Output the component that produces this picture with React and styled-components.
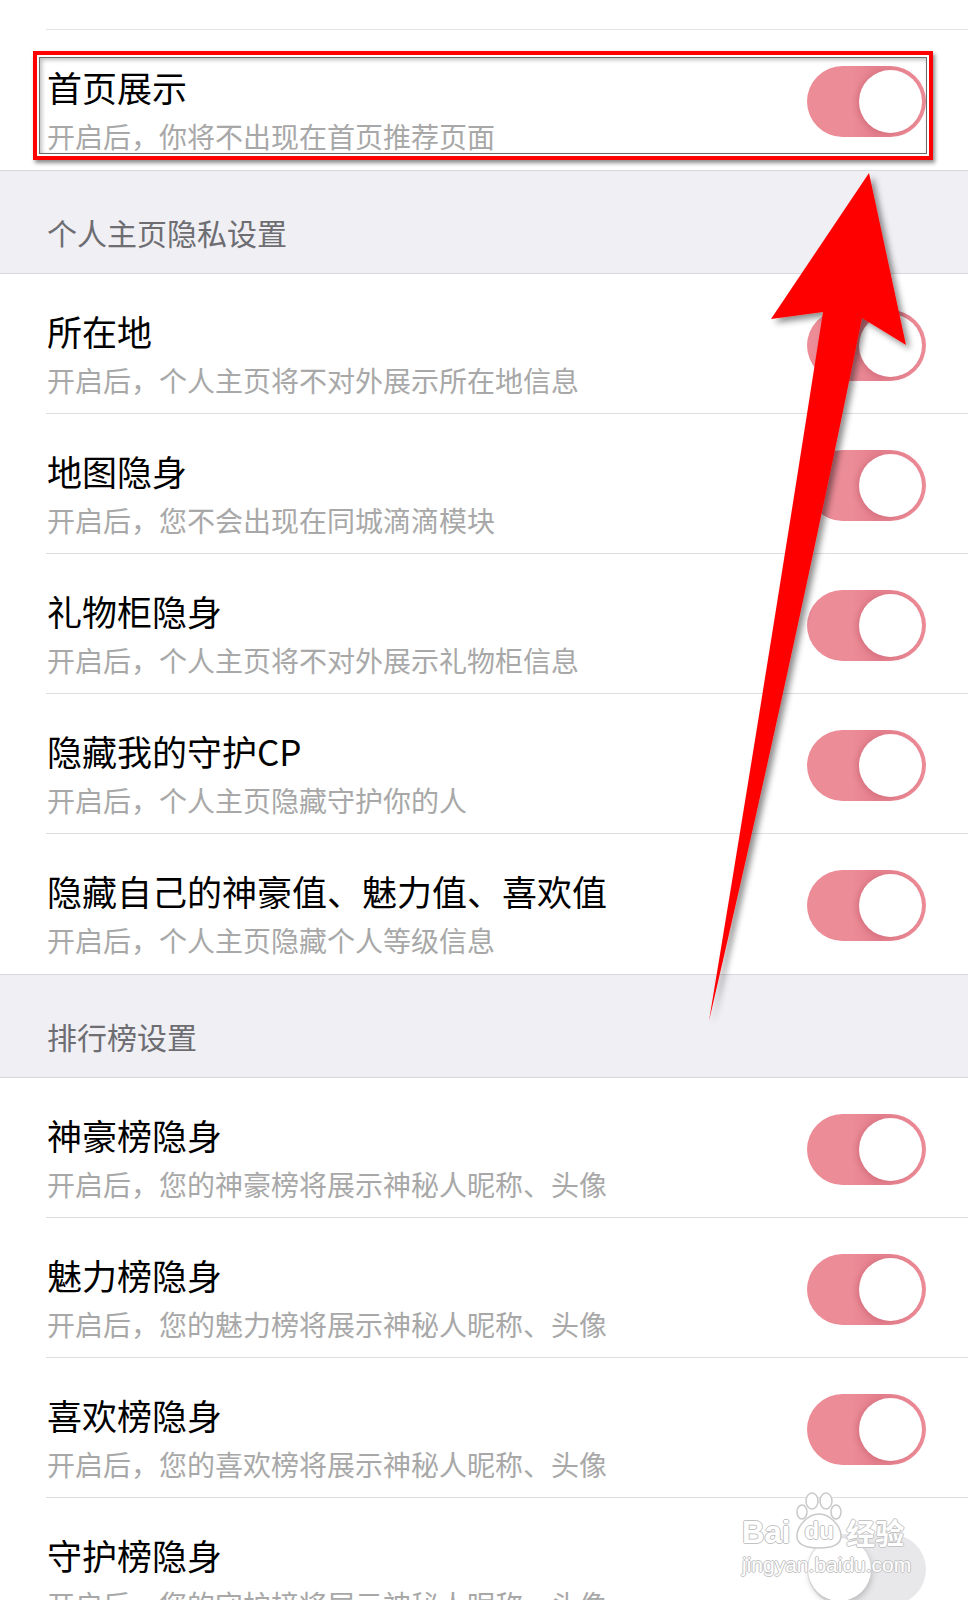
import styled, { createGlobalStyle } from 'styled-components'

const GlobalStyle = createGlobalStyle`
  html, body {
    margin: 0;
    padding: 0;
    background: #ffffff;
  }
  body {
    font-family: "Noto Sans CJK SC", "Noto Sans", sans-serif;
    overflow: hidden;
  }
`

const blocks = [
    { kind: 'row', title: '首页展示', sub: '开启后，你将不出现在首页推荐页面', on: true, last: true },
    { kind: 'header', text: '个人主页隐私设置' },
    { kind: 'row', title: '所在地', sub: '开启后，个人主页将不对外展示所在地信息', on: true },
    { kind: 'row', title: '地图隐身', sub: '开启后，您不会出现在同城滴滴模块', on: true },
    { kind: 'row', title: '礼物柜隐身', sub: '开启后，个人主页将不对外展示礼物柜信息', on: true },
    { kind: 'row', title: '隐藏我的守护CP', sub: '开启后，个人主页隐藏守护你的人', on: true },
    { kind: 'row', title: '隐藏自己的神豪值、魅力值、喜欢值', sub: '开启后，个人主页隐藏个人等级信息', on: true, last: true },
    { kind: 'header', text: '排行榜设置' },
    { kind: 'row', title: '神豪榜隐身', sub: '开启后，您的神豪榜将展示神秘人昵称、头像', on: true },
    { kind: 'row', title: '魅力榜隐身', sub: '开启后，您的魅力榜将展示神秘人昵称、头像', on: true },
    { kind: 'row', title: '喜欢榜隐身', sub: '开启后，您的喜欢榜将展示神秘人昵称、头像', on: true },
    { kind: 'row', title: '守护榜隐身', sub: '开启后，您的守护榜将展示神秘人昵称、头像', on: false },
]

export default function App() {
    return (
        <>
            <GlobalStyle />
            <Page>
                <TopStub />
                {blocks.map((b, i) => b.kind === 'header' ? (
                    <SectionHeader key={i}>{b.text}</SectionHeader>
                ) : (
                    <Row key={i} $last={b.last}>
                        <Texts>
                            <Title>{b.title}</Title>
                            <Sub>{b.sub}</Sub>
                        </Texts>
                        <Switch $on={b.on}>
                            <Knob $on={b.on} />
                        </Switch>
                    </Row>
                ))}

                <Highlight />

                <ArrowSvg viewBox="0 0 968 1600">
                    <defs>
                        <filter id="arrowShadow" x="-20%" y="-5%" width="140%" height="110%">
                            <feDropShadow dx="4" dy="4" stdDeviation="3" floodColor="#000" floodOpacity="0.45" />
                        </filter>
                    </defs>
                    <path
                        d="M869 173 L906 345 L862 318 Q795 650 709 1021 Q768 665 823 312 L771 319 Z"
                        fill="#ff0000"
                        filter="url(#arrowShadow)"
                    />
                </ArrowSvg>

                <Watermark>
                    <MarkLine>
                        <span>Bai</span>
                        <Paw>
                            <svg width="50" height="58" viewBox="0 0 50 58">
                                <g fill="#ffffff" stroke="#c9c9c9" strokeWidth="1.5">
                                    <ellipse cx="8" cy="20" rx="5" ry="7" />
                                    <ellipse cx="18" cy="9" rx="6" ry="8" />
                                    <ellipse cx="32" cy="9" rx="6" ry="8" />
                                    <ellipse cx="42" cy="20" rx="5" ry="7" />
                                    <path d="M25 22 C36 22 47 34 47 44 C47 53 38 56 25 56 C12 56 3 53 3 44 C3 34 14 22 25 22 Z" />
                                </g>
                            </svg>
                            <PawText>du</PawText>
                        </Paw>
                        <MarkCn>经验</MarkCn>
                    </MarkLine>
                    <MarkUrl>jingyan.baidu.com</MarkUrl>
                </Watermark>
            </Page>
        </>
    )
}

const Page = styled.div`
    position: relative;
    width: 968px;
    height: 1600px;
    overflow: hidden;
    background: #ffffff;
`

const TopStub = styled.div`
    height: 29px;
    margin-left: 46px;
    border-bottom: 1px solid #e3e3e3;
`

const Row = styled.div`
    box-sizing: border-box;
    height: 140px;
    margin-left: 46px;
    padding-right: 42px;
    display: flex;
    align-items: flex-start;
    justify-content: space-between;
    border-bottom: ${p => p.$last ? 'none' : '1px solid #dedede'};
`

const Texts = styled.div`
    display: flex;
    flex-direction: column;
    padding-top: 35px;
    padding-left: 1px;
`

const Title = styled.div`
    font-size: 35px;
    line-height: 44px;
    color: #000000;
    white-space: nowrap;
`

const Sub = styled.div`
    margin-top: 7px;
    font-size: 28px;
    line-height: 40px;
    color: #a8a8a8;
    white-space: nowrap;
`

const Switch = styled.div`
    flex: none;
    position: relative;
    margin-top: 36px;
    width: 119px;
    height: 71px;
    border-radius: 36px;
    background: ${p => p.$on
        ? 'linear-gradient(90deg, #ec8c97 0%, #ec8c97 38%, #e4808d 58%, #ec8c97 100%)'
        : '#e8e8ea'};
`

const Knob = styled.div`
    position: absolute;
    top: 4px;
    ${p => p.$on ? 'right: 4px;' : 'left: 1px;'}
    width: 63px;
    height: 63px;
    border-radius: 50%;
    background: #ffffff;
    box-shadow: ${p => p.$on
        ? '-3px 1px 5px rgba(170, 60, 80, 0.25)'
        : '1px 3px 6px rgba(0, 0, 0, 0.2)'};
`

const SectionHeader = styled.div`
    box-sizing: border-box;
    height: 104px;
    background: #efeff4;
    border-top: 1px solid #d8d8dc;
    border-bottom: 1px solid #d8d8dc;
    padding: 41px 0 0 47px;
    font-size: 30px;
    line-height: 40px;
    color: #6d6d72;
`

const Highlight = styled.div`
    position: absolute;
    left: 33px;
    top: 51px;
    width: 900px;
    height: 109px;
    box-sizing: border-box;
    border: 4px solid #ff0000;
    box-shadow:
        2px 3px 4px rgba(0, 0, 0, 0.45),
        inset 0 0 0 2px #ffffff,
        inset 0 0 0 3px #6a6a6a,
        inset 2px 2px 4px 3px rgba(0, 0, 0, 0.25);
    pointer-events: none;
`

const ArrowSvg = styled.svg`
    position: absolute;
    left: 0;
    top: 0;
    width: 968px;
    height: 1600px;
    pointer-events: none;
`

const Watermark = styled.div`
    position: absolute;
    left: 742px;
    top: 1492px;
    display: flex;
    flex-direction: column;
    align-items: flex-start;
    color: #ffffff;
    font-family: "Liberation Sans", "Noto Sans CJK SC", sans-serif;
    text-shadow:
        1px 0 0 #c4c4c4, -1px 0 0 #c4c4c4,
        0 1px 0 #c4c4c4, 0 -1px 0 #c4c4c4;
    pointer-events: none;
`

const MarkLine = styled.div`
    display: flex;
    align-items: flex-end;
    font-size: 31px;
    line-height: 34px;
    font-weight: bold;
`

const Paw = styled.div`
    position: relative;
    width: 50px;
    height: 58px;
    margin: 0 2px 0 4px;

    svg {
        display: block;
    }
`

const PawText = styled.span`
    position: absolute;
    left: 0;
    right: 0;
    bottom: 6px;
    text-align: center;
    font-size: 24px;
    line-height: 26px;
`

const MarkCn = styled.span`
    font-family: "Noto Sans CJK SC", sans-serif;
    font-size: 29px;
    line-height: 36px;
`

const MarkUrl = styled.div`
    margin-top: 3px;
    font-size: 21px;
    line-height: 24px;
`
